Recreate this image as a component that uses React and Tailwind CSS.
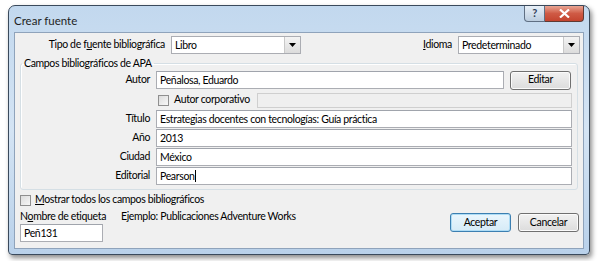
import React from "react";

const font = { fontFamily: 'Lato, "Noto Sans", sans-serif' };

function Arrow() {
  return (
    <div className="w-[16px] h-full border-l border-[#c8c8c8] bg-gradient-to-b from-[#f4f4f4] to-[#dcdcdc] flex items-center justify-center">
      <svg width="7" height="4" viewBox="0 0 7 4">
        <path d="M0 0h7L3.5 4z" fill="#000" />
      </svg>
    </div>
  );
}

function Select({ value, className }) {
  return (
    <div className={`h-[18px] bg-white border border-[#abadb3] flex items-stretch ${className}`}>
      <div className="flex-1 px-[3px] leading-[16px]">{value}</div>
      <Arrow />
    </div>
  );
}

function Field({ value, className = "", caret }) {
  return (
    <div className={`h-[18px] bg-white border border-[#abadb3] border-t-[#a0a4ac] px-[3px] leading-[16px] whitespace-nowrap ${className}`}>
      {value}
      {caret && <span className="inline-block w-px h-[12px] bg-black align-[-2px]" />}
    </div>
  );
}

function Row({ label, children }) {
  return (
    <div className="flex items-center h-[18px] mb-px">
      <div className="w-[135px] shrink-0 text-right pr-[6px]">{label}</div>
      {children}
    </div>
  );
}

function Check() {
  return <div className="w-[11px] h-[11px] shrink-0 border border-[#8f8f8f] bg-gradient-to-br from-[#dcdcdc] to-[#f7f7f7]" />;
}

function Button({ children, focus }) {
  return (
    <div
      className={`w-[61px] h-[19px] rounded-[3px] flex items-center justify-center border ${
        focus
          ? "border-[#3c7fb1] bg-gradient-to-b from-[#eaf6fd] to-[#d6ebf7] shadow-[inset_0_0_0_1px_#aedcf5]"
          : "border-[#707070] bg-gradient-to-b from-[#f2f2f2] to-[#dcdcdc] shadow-[inset_0_0_0_1px_#fbfbfb]"
      }`}
    >
      {children}
    </div>
  );
}

export default function App() {
  return (
    <div className="w-[598px] h-[261px] bg-white text-[10.5px] tracking-[-0.35px] text-black" style={font}>
      <div className="pl-[8px] pt-[5px]">
        <div className="w-[582px] h-[250px] rounded-t-[7px] rounded-b-[4px] border border-[#3a4a5c] bg-gradient-to-b from-[#c2d8ee] via-[#d4e4f4] to-[#b9d1ea] shadow-[2px_3px_5px_rgba(0,0,0,0.45)] flex flex-col">
          {/* title bar */}
          <div className="h-[26px] flex items-start pl-[5px] pr-[5px]">
            <div className="pt-[6px] text-[11.5px] tracking-normal text-[#1e1e1e]">Crear fuente</div>
            <div className="ml-auto flex">
              <div className="w-[21px] h-[16px] rounded-bl-[4px] border border-t-0 border-[#5f6f83] bg-gradient-to-b from-[#e8f0f8] to-[#bccddf] flex items-center justify-center text-[11px] text-[#30405a] font-bold">
                ?
              </div>
              <div className="w-[39px] h-[16px] rounded-br-[4px] border border-t-0 border-l-0 border-[#5f3a34] bg-gradient-to-b from-[#e8a493] via-[#cf5a45] to-[#c4442f] flex items-center justify-center">
                <svg width="11" height="9" viewBox="0 0 11 9">
                  <path d="M1 0.5l9 8M10 0.5l-9 8" stroke="#fff" strokeWidth="2.2" />
                </svg>
              </div>
            </div>
          </div>
          {/* client */}
          <div className="mx-[5px] mb-[5px] flex-1 bg-[#f0f0f0] border border-[#8fa3bb] pt-[3px] pr-[3px] flex flex-col">
            <div className="flex items-center h-[18px]">
              <div className="w-[156px] text-right pr-[6px]">
                Tipo de f<u>u</u>ente bibliográfica
              </div>
              <Select value="Libro" className="w-[130px]" />
              <div className="ml-auto mr-[6px]">
                <u>I</u>dioma
              </div>
              <Select value="Predeterminado" className="w-[122px]" />
            </div>

            <fieldset className="min-w-0 ml-[5px] mr-[2px] mt-[2px] border border-[#d5dfe5] rounded-[3px] pl-0 pr-[5px] pb-[3px] pt-0 shadow-[inset_1px_1px_0_#fff]">
              <legend className="ml-[1px] px-[2px] leading-[14px]">Campos bibliográficos de APA</legend>
              <div className="mt-[1px]">
                <Row label="Autor">
                  <Field value="Peñalosa, Eduardo" className="w-[348px]" />
                  <div className="ml-[6px]">
                    <Button>Editar</Button>
                  </div>
                </Row>
                <div className="flex items-center h-[16px] mt-[3px] mb-[2px]">
                  <div className="w-[137px] shrink-0" />
                  <Check />
                  <div className="ml-[5px] whitespace-nowrap">Autor corporativo</div>
                  <div className="ml-[7px] flex-1 h-[15px] border border-[#cfcfcf] bg-[#efefef]" />
                </div>
                <Row label="Título">
                  <Field value="Estrategias docentes con tecnologías: Guía práctica" className="flex-1" />
                </Row>
                <Row label="Año">
                  <Field value="2013" className="flex-1" />
                </Row>
                <Row label="Ciudad">
                  <Field value="México" className="flex-1" />
                </Row>
                <Row label="Editorial">
                  <Field value="Pearson" caret className="flex-1" />
                </Row>
              </div>
            </fieldset>

            <div className="flex items-center ml-[5px] mt-[4px] h-[12px]">
              <Check />
              <div className="ml-[4px]">
                <u>M</u>ostrar todos los campos bibliográficos
              </div>
            </div>
            <div className="flex ml-[5px] mt-[3px]">
              <div className="flex flex-col">
                <div className="flex h-[14px] leading-[14px]">
                  <div>
                    N<u>o</u>mbre de etiqueta
                  </div>
                  <div className="ml-[15px]">Ejemplo: Publicaciones Adventure Works</div>
                </div>
                <Field value="Peñ131" className="w-[83px] mt-[1px]" />
              </div>
              <div className="ml-auto mr-[1px] mt-[4px] flex gap-[7px]">
                <Button focus>Aceptar</Button>
                <Button>Cancelar</Button>
              </div>
            </div>
          </div>
        </div>
      </div>
    </div>
  );
}
